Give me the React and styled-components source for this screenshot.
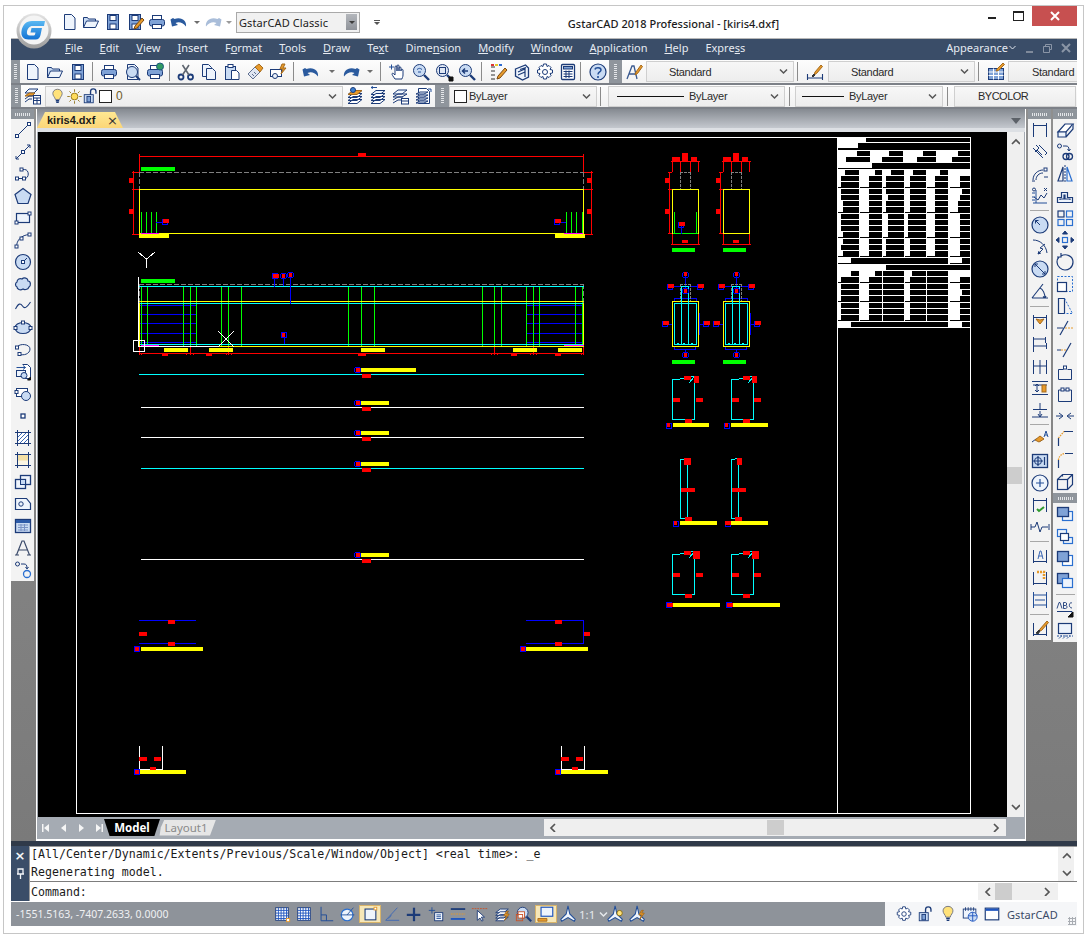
import React from 'react';
import styled, {createGlobalStyle} from 'styled-components';

const NAVY = '#1c3b78';
const SKY = '#c9dbf3';
const PALE = '#eef4fc';
const MID = '#7fa2d6';
const ORANGE = '#e79a2b';
const UI_FONT = '"Noto Sans", "Liberation Sans", sans-serif';

const GlobalStyle = createGlobalStyle`
    html, body { margin: 0; padding: 0; background: #fff; }
`;

const Frame = styled.div`
    box-sizing: border-box;
    margin: 5px 0 0 3px;
    width: 1081px;
    height: 929px;
    border: 1px solid #c6c6c6;
    background: #fff;
    padding: 0 6px 7px 7px;
    display: flex;
    flex-direction: column;
    position: relative;
    font-family: ${UI_FONT};
    overflow: hidden;
`;

/* ---------- icons ---------- */
const Svg = styled.svg`
    display: block;
    fill: none;
    stroke: ${NAVY};
    stroke-width: 1;
    flex: none;
`;

const Arrow = ({fill, flip}) => (
    <g transform={flip ? 'translate(20 0) scale(-1 1)' : undefined}>
        <path d="M1.5 7.5l1.500 7 6-1.500-2.500-2c3-1.500 7-1 10.500 3.500 1-5-4-10-11.500-7.500l-1.500-1z" fill={fill} stroke="none"/>
    </g>
);
const Glass = ({fill = SKY}) => (
    <>
        <circle cx="8.5" cy="8.5" r="6" fill={fill}/>
        <path d="M13 13l5 5" strokeWidth="2.4"/>
    </>
);
const PagePlain = () => <path d="M5.5 2.5h7l3.5 3.5v11.5h-10.5z" fill={PALE}/>;
const SaveShape = () => (
    <>
        <rect x="4.5" y="2.5" width="11" height="15" fill={MID}/>
        <rect x="7" y="3.5" width="6" height="5" fill="#fff"/>
        <rect x="7" y="12" width="6" height="5" fill="#fff"/>
    </>
);
const PrintShape = () => (
    <>
        <rect x="5.5" y="3.5" width="9" height="4" fill="#fff"/>
        <rect x="2.5" y="7.5" width="15" height="6.5" rx="2" fill={MID}/>
        <rect x="5.5" y="12.5" width="9" height="4" fill="#fff"/>
    </>
);
const Pencil = () => <path d="M9 17l1-3 7-8 2 2-7 8z" fill={ORANGE} stroke="#7a4a12"/>;
const Square = ({x, y, s = 3}) => <rect x={x} y={y} width={s} height={s} fill="#fff" strokeWidth="1"/>;
const DimBase = () => <path d="M3.5 4v13M16.5 4v13M3.5 15.5h13"/>;
const DimTop = () => <path d="M3.5 3v14M16.5 3v14M3.5 5.5h13"/>;
const Layers = () => (
    <>
        <path d="M3 8.5l5-4h9l-5 4z" fill={PALE}/>
        <path d="M3 11.5l5-4h9l-5 4zM3 14.5l5-4h9l-5 4zM3 17.5l5-4h9l-5 4z" fill="#fff"/>
    </>
);
const Bulb = ({fill = '#ffe27a'}) => (
    <>
        <path d="M10 1.5c-3.5 0-5.500 2.500-5.500 5 0 3 2.500 4 3 7h5c.5-3 3-4 3-7 0-2.500-2-5-5.500-5z" fill={fill} stroke="#6b6f80"/>
        <path d="M8 15h4M8.5 17h3" stroke={NAVY} strokeWidth="1.5"/>
    </>
);
const LockOpen = () => (
    <>
        <rect x="2.5" y="8.5" width="10" height="9" fill={SKY}/>
        <rect x="5.5" y="10.5" width="4" height="6" fill={MID}/>
        <path d="M9.5 8.5v-3.500c0-2 1.500-3 3-3s3 1 3 3v2.500" strokeWidth="1.5"/>
    </>
);
const Cog = () => (
    <>
        <path d="M8.5 2h3l.5 2.500 2-1 2 2-1 2 2.500.5v3l-2.500.5 1 2-2 2-2-1-.5 2.500h-3l-.5-2.500-2 1-2-2 1-2-2.500-.5v-3l2.500-.5-1-2 2-2 2 1z" fill="#fff"/>
        <circle cx="10" cy="10" r="2.5"/>
    </>
);

const ICONS = {
    new: <PagePlain/>,
    open: (
        <>
            <path d="M2.5 15.5v-10h4l1 1.500h7v2" fill={SKY}/>
            <path d="M2.5 15.5l3-6.500h12l-3 6.500z" fill={PALE}/>
        </>
    ),
    save: <SaveShape/>,
    saveas: (
        <>
            <SaveShape/>
            <Pencil/>
        </>
    ),
    print: <PrintShape/>,
    undo: <Arrow fill="#2a5a9e"/>,
    redo: <Arrow fill="#2a5a9e" flip/>,
    redoOff: <Arrow fill="#a9bdd9" flip/>,
    preview: (
        <>
            <PagePlain/>
            <circle cx="10" cy="10" r="5.5" fill={SKY}/>
            <path d="M14 14l4 4" strokeWidth="2"/>
        </>
    ),
    plot: (
        <>
            <PrintShape/>
            <circle cx="15" cy="4.5" r="3.5" fill="#2f9a62" stroke="#1a5a7a"/>
        </>
    ),
    cut: (
        <>
            <circle cx="5" cy="15" r="2.5" strokeWidth="1.8"/>
            <circle cx="14.5" cy="15" r="2.5" strokeWidth="1.8"/>
            <path d="M6.5 13l6.500-10M13 13l-6.500-10" stroke="#5f6670" strokeWidth="1.6"/>
        </>
    ),
    copy: (
        <>
            <path d="M3.5 2.5h6l3 3v9h-9z" fill={PALE}/>
            <path d="M7.5 6.5h6l3 3v8h-9z" fill={PALE}/>
        </>
    ),
    paste: (
        <>
            <rect x="3.5" y="4.5" width="10" height="13" fill={SKY}/>
            <rect x="6" y="2.5" width="5" height="3" fill="#fff"/>
            <path d="M9.5 8.5h5l2.500 2.500v6.500h-7.500z" fill="#fff"/>
        </>
    ),
    match: (
        <>
            <path d="M3 12l7-7 5 5-7 7z" fill="#dfe6f2" stroke="#5f6f90"/>
            <path d="M10 5l4-3 4 4-3 4z" fill={ORANGE} stroke="#a56a1c"/>
            <path d="M5 14l2 2M7 12l2 2M9 10l2 2" stroke="#5f6f90"/>
        </>
    ),
    block: (
        <>
            <rect x="2.5" y="7.5" width="11" height="7" fill="#fff"/>
            <circle cx="7" cy="14" r="2.5" fill={PALE}/>
            <path d="M14 2l-2 5h3l-2 5 5-6h-3l2-4z" fill={ORANGE} stroke="#a56a1c"/>
        </>
    ),
    pan: (
        <>
            <path d="M7 17c-2-3-3-4-3-5s1-1 2 0l1 1V5c0-1.500 2-1.500 2 0v4V4c0-1.500 2-1.500 2 0v5-3c0-1.500 2-1.500 2 0v3-1c0-1 2-1 2 0v5c0 2-1 3-1 4z" fill="#fff"/>
            <path d="M1 5h5M3.5 2.5v5" stroke="#234f98"/>
        </>
    ),
    zoomrt: (
        <>
            <Glass/>
            <path d="M6 7.5c2-1.500 3-1.500 5 0M7 10h3" stroke="#234f98"/>
        </>
    ),
    zoomwin: (
        <>
            <Glass fill="#dfe6f2"/>
            <rect x="5.5" y="5.5" width="6" height="6"/>
            <path d="M15 15h4v4h-4z" fill="#111" stroke="#111"/>
        </>
    ),
    zoomprev: (
        <>
            <Glass/>
            <path d="M11 9H6M8 6.5L5.500 9 8 11.500" strokeWidth="1.5"/>
        </>
    ),
    props: (
        <>
            <path d="M2 5h4M2 9h4M2 13h4M2 17h4" stroke="#333"/>
            <rect x="2" y="2" width="3" height="2" fill="#d33" stroke="none"/>
            <rect x="6" y="2" width="3" height="2" fill="#e7c62b" stroke="none"/>
            <rect x="10" y="2" width="3" height="2" fill="#2f6bd0" stroke="none"/>
            <path d="M8 17l1-3 7-8 2 2-7 8z" fill={ORANGE} stroke="#7a4a12"/>
        </>
    ),
    palette: (
        <>
            <path d="M3.5 7l10-4 3 3v9l-6 3-7-4z" fill={PALE} strokeWidth="1.3"/>
            <path d="M6 10l7-3v8M8 7.5l6-2M6 13l7-3" strokeWidth="1.2"/>
        </>
    ),
    cog: <Cog/>,
    calc: (
        <>
            <rect x="3.5" y="2.5" width="13" height="15" rx="1" fill="#fff" strokeWidth="1.3"/>
            <rect x="5.5" y="4.5" width="9" height="2.5" fill={MID}/>
            <path d="M5.5 9.5h9M5.5 12h9M5.5 14.5h9M8 8.5v7.500M11 8.5v7.500" stroke={NAVY}/>
        </>
    ),
    help: (
        <>
            <circle cx="10" cy="10" r="8" fill={SKY} strokeWidth="1.2"/>
            <path d="M7 7.5c.5-2.500 6-2.500 6 .5 0 2-3 2-3 4.500" strokeWidth="1.5" stroke="#234f98"/>
            <path d="M10 14v2" strokeWidth="1.6" stroke="#234f98"/>
        </>
    ),
    textstyle: (
        <>
            <path d="M3 17l5-13h2l3 13M5.5 12h6" strokeWidth="1.3" stroke="#3a5a90"/>
            <path d="M11 13l1-3 5-7 1.500 1.500-5 7z" fill={ORANGE} stroke="#a56a1c"/>
        </>
    ),
    dimstyle: (
        <>
            <path d="M2.5 12v6M17.5 12v6M2.5 16h15" strokeWidth="1.1"/>
            <path d="M9 13l1-3 6-7 1.500 1.500-6 7z" fill={ORANGE} stroke="#a56a1c"/>
            <path d="M7 14l2-2 1 1-2 2z" fill="#333" stroke="#333"/>
        </>
    ),
    tablestyle: (
        <>
            <rect x="2.5" y="6.5" width="15" height="11" fill={MID}/>
            <path d="M2.5 10h15M2.5 13.5h15M7.5 6.5v11M12.5 6.5v11" stroke="#fff"/>
            <path d="M10 9l1-2 6-6 1.500 1.500-6 6z" fill={ORANGE} stroke="#a56a1c"/>
        </>
    ),
    layerprops: (
        <>
            <path d="M2 7l4-4h9l-4 4z" fill={PALE}/>
            <path d="M2 10l4-3h6l-3 3z" fill={ORANGE} stroke="#a56a1c"/>
            <path d="M2 13l4-3h4M2 16l4-3h3"/>
            <rect x="10.5" y="9.5" width="7" height="8.5" fill="#fff"/>
            <path d="M10.5 12h7M10.5 14.5h7M14 12v6"/>
        </>
    ),
    bulb: <Bulb/>,
    sun: (
        <>
            <circle cx="10" cy="10" r="4" fill="#ffdc5c" stroke="#8a6d10"/>
            <path d="M10 1.5v3M10 15.5v3M1.5 10h3M15.5 10h3M4 4l2 2M14 14l2 2M4 16l2-2M14 6l2-2" stroke="#8a6d10"/>
        </>
    ),
    lock: <LockOpen/>,
    layerA: (
        <>
            <Layers/>
            <path d="M3 8.5l5-4h9l-5 4z" fill={ORANGE} stroke="#a56a1c"/>
            <circle cx="8" cy="4" r="2.5" fill="#3c7fd0"/>
        </>
    ),
    layerB: (
        <>
            <Layers/>
            <path d="M3 1.5h6M3 1.5l2-1M3 1.5l2 1" stroke="#234f98"/>
        </>
    ),
    layerC: (
        <>
            <path d="M2 8l5-4h9l-5 4z" fill={PALE}/>
            <path d="M2 11l5-3h9l-5 3zM2 14l5-3h5M2 17l5-3h4"/>
            <rect x="10.5" y="12.5" width="7" height="5.5" fill="#fff"/>
            <path d="M10.5 15h7"/>
        </>
    ),
    layerD: (
        <>
            <path d="M4.5 2.5h8l3 3v12h-11z" fill="#fff"/>
            <path d="M2 8l4-2h8l-4 2zM2 11l4-2h8l-4 2zM2 14l4-2h8l-4 2zM2 17l4-2h8l-4 2z" fill={PALE}/>
            <path d="M14 3l3 0v3" stroke="#234f98"/>
        </>
    ),

    /* draw dock */
    line: (
        <>
            <path d="M4 16L16 4"/>
            <Square x={2.5} y={14.5}/>
            <Square x={14.5} y={2.5}/>
        </>
    ),
    xline: (
        <>
            <path d="M3 17L17 3"/>
            <path d="M3 17v-3M3 17h3M17 3v3M17 3h-3"/>
            <Square x={8.5} y={8.5}/>
        </>
    ),
    pline: (
        <>
            <path d="M4.5 14.5h7c5 0 5-9 0-9h-3"/>
            <Square x={2.5} y={13}/>
            <Square x={9.5} y={13}/>
            <Square x={7} y={4}/>
        </>
    ),
    polygon: <path d="M10 2.5l8 6-3 9H5l-3-9z" fill={SKY} strokeWidth="1.2"/>,
    rect: (
        <>
            <rect x="3.5" y="5.5" width="13" height="9" fill={PALE} strokeWidth="1.2"/>
            <Square x={2} y={13}/>
            <Square x={15} y={4}/>
        </>
    ),
    arc: (
        <>
            <path d="M3.5 17c0-7 5-12 13-12.500"/>
            <Square x={2} y={15}/>
            <Square x={15} y={3}/>
            <Square x={7} y={7}/>
        </>
    ),
    circle: (
        <>
            <circle cx="10" cy="10" r="7.5" fill={SKY} strokeWidth="1.2"/>
            <path d="M10 10l4-4"/>
            <Square x={8.5} y={8.5}/>
        </>
    ),
    cloud: <path d="M4 8c0-3 3-4 5-3 2-2 6-1 6 2 3 0 3 5 1 6-1 3-5 3-6 2-3 2-6 0-6-2-2-1-2-4 0-5z" fill={SKY} strokeWidth="1.2"/>,
    spline: <path d="M2.5 13c3-6 5-6 7-3s4 2 8-4" strokeWidth="1.1"/>,
    ellipse: (
        <>
            <ellipse cx="10" cy="10" rx="8" ry="5.5" fill={SKY} strokeWidth="1.2"/>
            <Square x={8.5} y={3}/>
            <Square x={1} y={8.5}/>
            <Square x={16} y={8.5}/>
        </>
    ),
    earc: (
        <>
            <path d="M4 7c3-4 13-3 13 2s-7 7-10 5"/>
            <Square x={2.5} y={6}/>
            <Square x={5} y={12.5}/>
        </>
    ),
    insert: (
        <>
            <path d="M9.5 2.5h5l3 3v11H12" fill="#fff"/>
            <rect x="3.5" y="8.5" width="9" height="6" fill={PALE}/>
            <path d="M3.5 5.5h9M10 3.5l2.500 2-2.500 2" stroke="#234f98"/>
            <circle cx="11" cy="13.5" r="3" fill={SKY}/>
            <path d="M14.5 18l3-3v3z" fill="#111" stroke="#111"/>
        </>
    ),
    blockdef: (
        <>
            <rect x="3.5" y="4.5" width="11" height="8" fill="#fff"/>
            <circle cx="13" cy="12" r="4.5" fill={SKY}/>
            <Square x={2} y={6.5}/>
        </>
    ),
    point: <rect x="8" y="8" width="4" height="4" fill="#fff" strokeWidth="1.3"/>,
    hatch: (
        <>
            <rect x="4.5" y="4.5" width="11" height="11" fill="#fff"/>
            <path d="M5 13l8-8M7 15l8-8M5 9l4-4M11 15l4-4" stroke="#3c68b5"/>
            <path d="M2 4.5h16M2 15.5h16M4.5 2v16M15.5 2v16"/>
        </>
    ),
    gradient: (
        <>
            <rect x="4.5" y="4.5" width="11" height="11" fill="#f3dfa5"/>
            <rect x="4.5" y="10.5" width="11" height="5" fill="#fbf6e4" stroke="none"/>
            <path d="M2 4.5h16M2 15.5h16M4.5 2v16M15.5 2v16"/>
        </>
    ),
    region: (
        <>
            <rect x="7.5" y="3.5" width="10" height="9" fill={PALE} strokeWidth="1.3"/>
            <rect x="2.5" y="7.5" width="10" height="9" fill={PALE} strokeWidth="1.3"/>
            <rect x="7.5" y="7.5" width="5" height="5" fill={SKY}/>
        </>
    ),
    wipeout: (
        <>
            <path d="M2.5 4.5h11l4 5v6h-15z" fill={PALE} strokeWidth="1.2"/>
            <circle cx="8" cy="10" r="2.2"/>
        </>
    ),
    table: (
        <>
            <rect x="2.5" y="3.5" width="15" height="13" fill={SKY} strokeWidth="1.3"/>
            <rect x="3" y="4" width="14" height="3" fill="#2c5aa8" stroke="none"/>
            <path d="M5 9h10M5 11.5h10M5 14h10M8 8v7M11.5 8v7" stroke="#7a93c5"/>
        </>
    ),
    text: <path d="M3.5 17l5.500-14h2l5.500 14M6 12h8M2 17h4M14 17h4" stroke="#3a4a6a" strokeWidth="1.2"/>,
    addsel: (
        <>
            <circle cx="4.5" cy="4" r="2"/>
            <circle cx="14" cy="14" r="3.5" stroke="#2a6fd0" strokeWidth="1.3"/>
            <path d="M8 4h3c2 0 3 1 3 4M12.5 7l1.500 2 1.500-2"/>
        </>
    ),

    /* dimension dock */
    dimlinear: <DimTop/>,
    dimaligned: <path d="M3 6l10 10M9 3l8 8-2 2M6 3l3 3-4 4M7 8l5 5"/>,
    dimarc: (
        <>
            <path d="M3 16c0-6 5-10 10-10M6 16c0-4 3-7 7-7"/>
            <Square x={14} y={4}/>
            <path d="M2 17h3M14 13h4"/>
        </>
    ),
    dimord: (
        <>
            <path d="M3 17h14M6 4v13" stroke="#234f98"/>
            <path d="M4 11l4 3 3-5 3 3 3-5"/>
            <circle cx="4" cy="3.5" r="1.5"/>
            <path d="M14 2l3 3M17 2l-3 3"/>
            <path d="M2 7h3M2 11h3M2 14h3" stroke="#234f98"/>
        </>
    ),
    dimrad: (
        <>
            <circle cx="10" cy="10" r="8" fill={SKY} strokeWidth="1.2"/>
            <path d="M10 10L5.500 5.500M5.5 5.5v3M5.5 5.5h3"/>
        </>
    ),
    dimjog: <path d="M3 3c7 0 13 5 14 13M15 7l-5 4 3 1-5 5M8 17l1-3M8 17l3-1"/>,
    dimdia: (
        <>
            <circle cx="10" cy="10" r="8" fill={SKY} strokeWidth="1.2"/>
            <path d="M5 5l10 10M5 5v3M5 5h3M15 15v-3M15 15h-3"/>
        </>
    ),
    dimang: <path d="M2 17h16M2 17L13 3M10 7c3 1 5 6 5 10M15 17l-2-1.500M15 17l1-2" strokeWidth="1.1"/>,
    quickdim: (
        <>
            <DimTop/>
            <path d="M6 7l4 5 4-5-4 1z" fill={ORANGE} stroke="#a56a1c"/>
        </>
    ),
    dimbase: <path d="M3.5 3v15M3.5 5h12M15.5 3v6M3.5 12h13M16.5 9v6"/>,
    dimcont: <path d="M3.5 4v14M10 4v14M16.5 4v14M3.5 10h13"/>,
    dimspace: (
        <>
            <path d="M2 3.5h16M2 16.5h16M3 7h14"/>
            <rect x="12" y="7" width="4" height="7" fill={ORANGE} stroke="#a56a1c"/>
            <path d="M7 6v8M5 8l2-2 2 2M5 12l2 2 2-2"/>
        </>
    ),
    dimbreak: <path d="M3 9.5h14M10 3v6M10 11v6M2 17h16M8 14l2 3 2-3"/>,
    leader: (
        <>
            <path d="M2 13l4-3 5 2"/>
            <path d="M5 11l5-4 4 3-5 3z" fill={ORANGE} stroke="#a56a1c"/>
            <path d="M14 8l2-6 2 6M15 6h2" stroke="#234f98"/>
        </>
    ),
    tol: (
        <>
            <rect x="2.5" y="3.5" width="15" height="13" fill={SKY} strokeWidth="1.3"/>
            <circle cx="8" cy="10" r="3.5"/>
            <path d="M3 10h10M8 5v10M14.5 6v8" strokeWidth="1.2"/>
        </>
    ),
    center: (
        <>
            <circle cx="10" cy="10" r="8" fill={PALE} strokeWidth="1.2"/>
            <path d="M10 6v8M6 10h8" stroke="#234f98" strokeWidth="1.2"/>
        </>
    ),
    inspect: (
        <>
            <DimTop/>
            <path d="M7 14l2 2 5-4" stroke="#2f9a2f" strokeWidth="2"/>
        </>
    ),
    jogline: <path d="M1 10h4l2-5 3 10 2-5h6M1 7v6M19 7v6"/>,
    dimedit: (
        <>
            <DimBase/>
            <path d="M8 13l2-8h1l2 8M8.5 10h4" stroke="#3c68b5"/>
        </>
    ),
    dimtedit: (
        <>
            <DimBase/>
            <path d="M7 4h7v7" stroke={ORANGE} strokeWidth="2.5" strokeDasharray="2 1"/>
        </>
    ),
    dimupdate: <path d="M3.5 2v16M16.5 2v16M3.5 5h13M3.5 15h13M5 10h10" stroke="#234f98"/>,
    dimbrush: (
        <>
            <DimBase/>
            <path d="M9 12l1-2 7-8 1.500 1.500-7 8z" fill={ORANGE} stroke="#a56a1c"/>
            <path d="M6 14l3-3 1 1-2 3z" fill="#333" stroke="#333"/>
        </>
    ),

    /* modify dock */
    erase: (
        <>
            <path d="M3 12l7-8h8l-7 8z" fill="#fff" strokeWidth="1.2"/>
            <path d="M3 12h8v5H3zM11 17l7-8v-5" fill={PALE} strokeWidth="1.2"/>
        </>
    ),
    copyobj: (
        <>
            <circle cx="4.5" cy="4" r="2"/>
            <circle cx="14.5" cy="14.5" r="3" strokeWidth="1.3"/>
            <circle cx="11" cy="14.5" r="3" strokeWidth="1.3"/>
            <path d="M8 4h3c2 0 3 1 3 4M12.5 7l1.500 2 1.500-2"/>
        </>
    ),
    mirror: (
        <>
            <path d="M8 3L3 17h5z" strokeWidth="1.2"/>
            <path d="M12 3l5 14h-5z" stroke="#2a6fd0" strokeWidth="1.2"/>
            <path d="M10 1v18" strokeDasharray="2 1"/>
        </>
    ),
    offset: <path d="M2.5 16.5v-5h4v-5h6v5h5v5zM5 14v-1h4V9h1v4h5v1" strokeWidth="1.2" fill={PALE}/>,
    array: (
        <>
            <rect x="3" y="3" width="6" height="6" strokeWidth="1.2"/>
            <rect x="11.5" y="3" width="6" height="6" stroke="#2a6fd0" strokeWidth="1.2"/>
            <rect x="3" y="11.5" width="6" height="6" stroke="#2a6fd0" strokeWidth="1.2"/>
            <rect x="11.5" y="11.5" width="6" height="6" stroke="#2a6fd0" strokeWidth="1.2"/>
        </>
    ),
    move: (
        <>
            <rect x="7.5" y="7.5" width="5" height="5" stroke="#2a6fd0" strokeWidth="1.2"/>
            <path d="M10 1l-2.500 3h5zM10 19l-2.500-3h5zM1 10l3-2.500v5zM19 10l-3-2.500v5z" fill={NAVY}/>
        </>
    ),
    rotate: <path d="M6 4c5-3 12 0 12 6s-5 8-8 8-8-3-8-8c0-2 1-4 2-5M6 1v4H2" strokeWidth="1.2"/>,
    scale: (
        <>
            <rect x="2.5" y="2.5" width="15" height="15" stroke="#2a6fd0" strokeDasharray="2 1.5"/>
            <rect x="2.5" y="8.5" width="9" height="9" fill="#fff" strokeWidth="1.2"/>
        </>
    ),
    stretch: (
        <>
            <path d="M3.5 2.5h6v15h-6z" strokeWidth="1.2"/>
            <path d="M9.5 2.5l8 15h-8" stroke="#2a6fd0" strokeDasharray="2 1.5"/>
        </>
    ),
    trim: (
        <>
            <path d="M5 17L13 3" strokeWidth="1.2"/>
            <path d="M2 10h6"/>
            <path d="M10 10h8" stroke={ORANGE} strokeDasharray="2 1"/>
        </>
    ),
    extend: (
        <>
            <path d="M8 17L16 3" strokeWidth="1.2"/>
            <path d="M2 10h4"/>
            <path d="M6 10h6" stroke={ORANGE} strokeDasharray="2 1"/>
        </>
    ),
    breakpt: (
        <>
            <path d="M3.5 7.5v10h13v-10h-4M3.5 7.5h5"/>
            <Square x={8.5} y={4}/>
        </>
    ),
    breaks: (
        <>
            <path d="M3.5 6v11.500h13V6M3.5 6H6M14 6h2.500M9 6h2"/>
            <Square x={6} y={4}/>
            <Square x={11} y={4}/>
        </>
    ),
    join: <path d="M1 10h6M19 10h-6M4 7l4 3-4 3M16 7l-4 3 4 3"/>,
    chamfer: (
        <>
            <path d="M3.5 18v-8M9 3.5h9" strokeWidth="1.2"/>
            <path d="M3.5 10L9 3.500" stroke={ORANGE} strokeWidth="1.3" strokeDasharray="1.5 1"/>
        </>
    ),
    fillet: (
        <>
            <path d="M3.5 18v-8M10 3.5h8" strokeWidth="1.2"/>
            <path d="M3.5 10c0-3 3-6.500 6.500-6.500" stroke={ORANGE} strokeWidth="1.3" strokeDasharray="1.5 1"/>
        </>
    ),
    explode: (
        <>
            <rect x="2.5" y="7.5" width="10" height="10" strokeWidth="1.2"/>
            <path d="M2.5 7.5l5-5h10v10l-5 5M12.5 7.5l5-5M7.5 2.5v2" strokeWidth="1.2"/>
        </>
    ),
    front: (
        <>
            <rect x="7.5" y="7.5" width="10" height="9" fill={PALE} stroke="#2a6fd0" strokeWidth="1.2"/>
            <rect x="2.5" y="3.5" width="11" height="9" fill={MID} strokeWidth="1.3"/>
        </>
    ),
    back: (
        <>
            <rect x="2.5" y="3.5" width="9" height="7" fill={PALE} stroke="#2a6fd0" strokeWidth="1.2"/>
            <rect x="8.5" y="11.5" width="9" height="6" fill={PALE} stroke="#2a6fd0" strokeWidth="1.2"/>
            <rect x="5.5" y="7.5" width="8" height="7" fill="#fff" strokeWidth="1.2"/>
        </>
    ),
    above: (
        <>
            <rect x="7.5" y="7.5" width="10" height="10" fill="#fff" stroke="#2a6fd0" strokeWidth="1.2"/>
            <rect x="2.5" y="3.5" width="11" height="10" fill={MID} strokeWidth="1.3"/>
        </>
    ),
    below: (
        <>
            <rect x="2.5" y="3.5" width="11" height="10" fill={MID} strokeWidth="1.3"/>
            <rect x="7.5" y="8.5" width="10" height="9" fill={PALE} stroke="#2a6fd0" strokeWidth="1.2"/>
        </>
    ),
    spell: (
        <>
            <path d="M2 9.5l2-6h1l2 6M8.5 3.5v6M8.5 3.5h2c1.500 0 1.500 3 0 3h-2M10.5 6.5c2 0 2 3 0 3h-2M17 4c-3-1.500-4 5 0 5" strokeWidth=".9"/>
            <path d="M2 12.5h15v5"/>
            <path d="M13 18l5-5v5z" fill="#111" stroke="#111"/>
        </>
    ),
    mtedit: (
        <>
            <rect x="3.5" y="2.5" width="13" height="10" fill={PALE} strokeWidth="1.2"/>
            <path d="M2 15h16M4 17.5l3-3M8 17.5l3-3M12 17.5l3-3" strokeDasharray="2 1" stroke="#234f98"/>
        </>
    ),

    /* status bar */
    snap: (
        <>
            <rect x="3" y="3" width="14" height="14" fill="#fff"/>
            <path d="M3 6h14M3 9h14M3 12h14M3 15h14M6 3v14M9 3v14M12 3v14M15 3v14" stroke="#1e55c0"/>
            <rect x="15" y="15" width="3.5" height="3.5" fill="#fff" stroke={ORANGE}/>
        </>
    ),
    grid: (
        <>
            <rect x="3" y="3" width="14" height="14" fill="#fff"/>
            <path d="M3 6h14M3 9h14M3 12h14M3 15h14M6 3v14M9 3v14M12 3v14M15 3v14" stroke="#1e55c0"/>
        </>
    ),
    ortho: <path d="M4.5 2v15.500H18M4.5 11h6v6.500" stroke="#234f98" strokeWidth="1.1"/>,
    polar: (
        <>
            <circle cx="9" cy="11" r="6.5" stroke="#2a6fd0" strokeWidth="1.3" fill={PALE}/>
            <path d="M2 11h15M9 11l7-8" stroke="#234f98"/>
        </>
    ),
    osnap: (
        <>
            <rect x="4.5" y="4.5" width="12" height="12" fill={PALE} strokeWidth="1.2"/>
            <rect x="14.5" y="2.5" width="3" height="3" fill="#fff" stroke={ORANGE}/>
        </>
    ),
    otrack: <path d="M3 17h15M3 17L16 3M6 15c2-1 3-3 3-4" stroke="#3c68b5"/>,
    ducs: (
        <>
            <path d="M2 11h15" stroke="#1c3b78" strokeWidth="2.5"/>
            <path d="M10 3v15" stroke="#1c3b78" strokeWidth="2.5"/>
        </>
    ),
    dyn: (
        <>
            <path d="M2 6h7M5.5 2.5v7" stroke="#234f98"/>
            <rect x="8.5" y="8.5" width="9" height="9" fill={PALE}/>
            <path d="M10.5 11h5M10.5 13h5M10.5 15h5" stroke="#234f98"/>
        </>
    ),
    lwt: (
        <>
            <path d="M2 4.5h16" stroke={NAVY} strokeWidth="2"/>
            <path d="M2 10h16" stroke={ORANGE} strokeDasharray="2 1"/>
            <path d="M2 15.5h16" stroke="#1e55c0" strokeWidth="2"/>
        </>
    ),
    seltrans: (
        <>
            <path d="M1 4h18" stroke="#c8542a" strokeDasharray="2 1"/>
            <path d="M7 6v11l3-2.500 2 3.500 1.500-1-2-3.500h3.500z" fill="#fff" stroke="#1c3b78"/>
        </>
    ),
    qp: (
        <>
            <Layers/>
            <path d="M15 7l-3 5h3l-2 5 5-7h-3l2-3z" fill={ORANGE} stroke="#a56a1c"/>
        </>
    ),
    sc: (
        <>
            <Glass/>
            <rect x="3.5" y="7.5" width="7" height="7" fill="#fff" stroke="#c8542a"/>
            <rect x="1.5" y="10.5" width="7" height="7" fill="none" stroke="#c8542a"/>
        </>
    ),
    model: (
        <>
            <rect x="4.5" y="2.5" width="13" height="10" fill={PALE} strokeWidth="1.3" stroke="#1e55c0"/>
            <path d="M1 15h10v3H1z" fill={ORANGE} stroke="#a56a1c"/>
        </>
    ),
    anno: <path d="M10 1l2 9 6 6-1 2-7-4-7 4-1-2 6-6z" fill={PALE} stroke="#234f98" strokeWidth="1.2"/>,
    annoB: (
        <>
            <path d="M9 1l2 9 6 6-1 2-7-4-7 4-1-2 6-6z" fill={PALE} stroke="#234f98" strokeWidth="1.2"/>
            <circle cx="14" cy="9" r="3" fill="#ffe27a" stroke="#8a6d10"/>
        </>
    ),
    annoC: (
        <>
            <path d="M9 1l2 9 6 6-1 2-7-4-7 4-1-2 6-6z" fill={PALE} stroke="#234f98" strokeWidth="1.2"/>
            <path d="M14 6l-3 5h3l-2 5 5-7h-3l2-3z" fill={ORANGE} stroke="#a56a1c"/>
        </>
    ),
    traytoolbar: (
        <>
            <rect x="2.5" y="4.5" width="14" height="10" fill={PALE}/>
            <path d="M5 2.5v4M8 2.5v4M11 2.5v4M14 2.5v4"/>
            <circle cx="13" cy="13" r="5" fill={SKY} stroke="#1e55c0"/>
            <path d="M8 12h10M13 8v10" stroke="#1e55c0"/>
        </>
    ),
    window: (
        <>
            <rect x="2.5" y="3.5" width="15" height="13" fill="#fff" strokeWidth="1.3"/>
            <rect x="3" y="4" width="14" height="2.5" fill="#1e55c0" stroke="none"/>
        </>
    ),
};

const Icon = ({name, size = 20}) => (
    <Svg width={size} height={size} viewBox="0 0 20 20">{ICONS[name]}</Svg>
);

const Chevron = ({color = '#555'}) => (
    <svg width="9" height="7" viewBox="0 0 9 7" style={{display: 'block', flex: 'none'}}>
        <path d="M1 1.5l3.500 3.500 3.500-3.500" fill="none" stroke={color} strokeWidth="1.5"/>
    </svg>
);

const Caret = styled.span`
    width: 0;
    height: 0;
    border-left: 3.5px solid transparent;
    border-right: 3.5px solid transparent;
    border-top: 3.5px solid ${p => p.$color || '#6d6d6d'};
    flex: none;
`;

/* ---------- title bar ---------- */
const TitleBar = styled.div`
    height: 32px;
    flex: none;
    display: flex;
    align-items: center;
    position: relative;
`;

const LogoWrap = styled.div`
    position: absolute;
    left: 12px;
    top: 7px;
    z-index: 3;
`;

const Quick = styled.div`
    display: flex;
    align-items: center;
    padding-left: 47px;
`;

const QuickBtn = styled.div`
    width: ${p => p.$w || 22}px;
    display: flex;
    justify-content: center;
`;

const ProfileCombo = styled.div`
    box-sizing: border-box;
    width: 124px;
    height: 21px;
    margin-left: 1px;
    border: 1px solid #a9a9a9;
    background: #f1f1f1;
    display: flex;
    align-items: center;
    padding-left: 2px;
    font-size: 11px;
    letter-spacing: .1px;
    color: #222;
    justify-content: space-between;
`;

const ProfileDrop = styled.div`
    width: 11px;
    height: 16px;
    margin-right: 2px;
    background: linear-gradient(#b4b7bc, #8f939a);
    display: flex;
    align-items: center;
    justify-content: center;
`;

const QatMore = styled.div`
    margin-left: 14px;
    display: flex;
    flex-direction: column;
    gap: 1px;
    align-items: center;
    &::before {
        content: '';
        width: 6px;
        height: 1px;
        background: #555;
    }
`;

const WindowTitle = styled.div`
    position: absolute;
    left: 0;
    right: 0;
    top: 9px;
    text-align: center;
    margin-left: 259px;
    font-size: 11px;
    font-weight: 500;
    color: #1c1c1c;
    line-height: 18px;
`;

const WindowBtns = styled.div`
    margin-left: auto;
    display: flex;
    align-self: flex-start;
    position: relative;
    z-index: 1;
`;

const WinBtn = styled.div`
    width: ${p => p.$w}px;
    height: 20px;
    display: flex;
    align-items: center;
    justify-content: center;
    background: ${p => p.$bg || 'transparent'};
`;

const MinGlyph = styled.div`
    width: 8px;
    height: 2px;
    background: #222;
    margin-top: 4px;
`;

const MaxGlyph = styled.div`
    width: 9px;
    height: 7px;
    border: 1px solid #222;
    border-top-width: 2px;
`;

/* ---------- menu ---------- */
const MenuBar = styled.div`
    box-sizing: border-box;
    height: 22px;
    flex: none;
    background: #3a4d68;
    border-top: 1px solid #b7b7b7;
    display: flex;
    align-items: center;
    padding: 0 0 3px 54px;
    gap: 17px;
    color: #e6ebf2;
    font-size: 11px;
    line-height: 16px;
    position: relative;
    u { text-underline-offset: 1px; }
`;

const MenuItem = styled.span`
    white-space: nowrap;
`;

const MenuRight = styled.div`
    margin-left: auto;
    display: flex;
    align-items: center;
    padding-right: 6px;
    color: #e6ebf2;
`;

const DocBtns = styled.div`
    display: flex;
    align-items: center;
    gap: 9px;
    margin-left: 8px;
    color: #7f8a9b;
`;

/* ---------- tool rows ---------- */
const ToolRows = styled.div`
    flex: none;
    background: #7c8087;
    padding-bottom: 2px;
    display: flex;
    flex-direction: column;
    gap: 2px;
`;

const ToolRow = styled.div`
    height: ${p => p.$h || 23}px;
    display: flex;
    align-items: center;
    background: linear-gradient(#fdfdfd, #f1f1f1);
    overflow: hidden;
`;

const Grip = styled.div`
    width: ${p => p.$w || 10}px;
    align-self: stretch;
    background: #8f959c;
    flex: none;
    display: flex;
    align-items: center;
    justify-content: center;
    &::before {
        content: '';
        width: 3px;
        height: 16px;
        background: repeating-linear-gradient(#e4e6e9 0 1px, transparent 1px 2px);
    }
`;

const ToolBtn = styled.div`
    width: ${p => p.$w || 23}px;
    height: 21px;
    flex: none;
    display: flex;
    align-items: center;
    justify-content: center;
`;

const Sep = styled.div`
    width: 1px;
    height: 19px;
    background: #8b8b8b;
    flex: none;
    margin: 0 ${p => p.$r ?? 5}px 0 ${p => p.$l ?? 3}px;
`;

const Combo = styled.div`
    box-sizing: border-box;
    width: ${p => p.$w}px;
    height: 21px;
    flex: none;
    background: linear-gradient(#f7f7f7, #ededed);
    border: 1px solid #cfcfcf;
    display: flex;
    align-items: center;
    padding: 0 5px 0 ${p => p.$pad || 4}px;
    margin-left: ${p => p.$ml || 0}px;
    font-family: "Liberation Sans", sans-serif;
    font-size: 11px;
    color: #2a2a2a;
`;

const ComboText = styled.span`
    letter-spacing: ${p => p.$ls || 0}px;
    white-space: nowrap;
`;

const ComboEnd = styled.span`
    margin-left: auto;
    display: flex;
`;

const Swatch = styled.span`
    width: 11px;
    height: 11px;
    border: 1px solid #222;
    background: #fff;
    flex: none;
    margin-right: 2px;
`;

const LineSample = styled.span`
    height: 1px;
    background: #111;
    width: ${p => p.$w}px;
    flex: none;
    margin-right: 5px;
`;

const LayerCombo = styled(Combo)`
    padding-left: 3px;
`;

const LayerName = styled.span`
    color: #6e5c2b;
    margin-left: 2px;
    font-size: 12px;
`;

/* ---------- work area ---------- */
const Workspace = styled.div`
    height: 732px;
    flex: none;
    display: flex;
    background: linear-gradient(#8f8f8f, #7a7a7a);
`;

const Dock = styled.div`
    width: ${p => p.$w || 24}px;
    flex: none;
    align-self: flex-start;
    display: flex;
    flex-direction: column;
    background: #f3f3f3;
    margin-right: ${p => p.$mr || 0}px;
`;

const DockGrip = styled.div`
    height: ${p => p.$h || 10}px;
    background: #8f959c;
    display: flex;
    align-items: center;
    justify-content: center;
    &::before {
        content: '';
        width: 15px;
        height: 3px;
        background: repeating-linear-gradient(90deg, #e4e6e9 0 1px, transparent 1px 2px);
    }
`;

const DockBtn = styled.div`
    height: 22px;
    display: flex;
    align-items: center;
    justify-content: center;
`;

const DockSep = styled.div`
    height: ${p => p.$h || 7}px;
    display: flex;
    align-items: center;
    justify-content: center;
    &::before {
        content: '';
        width: 19px;
        height: 1px;
        background: #a8a8a8;
    }
`;

const Doc = styled.div`
    box-sizing: border-box;
    width: 990px;
    flex: none;
    background: #a5abb3;
    border: solid #fff;
    border-width: 0 1px 2px 1px;
    display: flex;
    flex-direction: column;
    margin: 0 2px;
`;

const DocTabs = styled.div`
    height: 23px;
    box-sizing: border-box;
    padding-top: 3px;
    flex: none;
    display: flex;
    align-items: flex-start;
    position: relative;
    background: linear-gradient(#858a91 0, #c4c8ce 19px, #dde0e4 19px, #dde0e4 100%);
`;

const DocTab = styled.div`
    box-sizing: border-box;
    width: 86px;
    height: 16px;
    background: linear-gradient(#ffe892, #fbd678);
    clip-path: polygon(0 100%, 8px 0, 78px 0, 100% 100%);
    display: flex;
    align-items: center;
    padding: 0 5px 0 10px;
    font-family: "Liberation Sans", sans-serif;
    font-size: 11px;
    font-weight: 700;
    color: #1a1a1a;
    justify-content: space-between;
`;

const TabClose = styled.span`
    font-size: 13px;
    font-weight: 400;
    color: #333;
    font-family: "DejaVu Sans", sans-serif;
`;

const DocListBtn = styled.div`
    position: absolute;
    right: 4px;
    top: 9px;
    width: 0;
    height: 0;
    border-left: 5px solid transparent;
    border-right: 5px solid transparent;
    border-top: 6px solid #5c6168;
`;

const CanvasRow = styled.div`
    height: 685px;
    flex: none;
    display: flex;
    padding-left: 1px;
`;

const Canvas = styled.div`
    width: 969px;
    height: 685px;
    background: #000;
    flex: none;
`;

const VScroll = styled.div`
    width: 17px;
    flex: none;
    box-sizing: border-box;
    background: #efefef;
    display: flex;
    flex-direction: column;
    align-items: center;
    justify-content: space-between;
    padding: 6px 0 5px;
    position: relative;
`;

const VThumb = styled.div`
    width: 15px;
    height: 17px;
    background: #cdcdcd;
    position: absolute;
    top: 335px;
    left: 0;
`;

const DocBottom = styled.div`
    height: 17px;
    margin-top: 2px;
    flex: none;
    display: flex;
    align-items: center;
`;

const TabNav = styled.div`
    display: flex;
    align-items: center;
    width: 67px;
    padding-left: 5px;
    box-sizing: border-box;
    gap: 9.5px;
`;

const NavGlyph = styled.svg`
    width: 8px;
    height: 8px;
    fill: #f5f5f5;
    flex: none;
`;

const ModelTab = styled.div`
    width: 56px;
    height: 17px;
    background: #000;
    color: #fff;
    font-size: 11.5px;
    font-weight: 700;
    clip-path: polygon(0 0, 100% 0, 90% 100%, 10% 100%);
    display: flex;
    align-items: center;
    justify-content: center;
    flex: none;
`;

const LayoutTab = styled.div`
    width: 60px;
    height: 16px;
    background: #e6e6e6;
    color: #8a8a8a;
    font-size: 11.5px;
    clip-path: polygon(8% 50%, 14% 0, 100% 0, 90% 100%, 6% 100%);
    display: flex;
    align-items: center;
    justify-content: center;
    flex: none;
    margin-left: -4px;
`;

const HScroll = styled.div`
    margin-left: auto;
    width: 462px;
    height: 17px;
    background: #efefef;
    margin-right: 19px;
    display: flex;
    align-items: center;
    justify-content: space-between;
    padding: 0 5px;
    box-sizing: border-box;
    position: relative;
`;

const HThumb = styled.div`
    position: absolute;
    left: 223px;
    top: 1px;
    width: 17px;
    height: 15px;
    background: #cdcdcd;
`;

const Arrowhead = ({dir}) => {
    const paths = {
        left: 'M6 1L2 5l4 4',
        right: 'M2 1l4 4-4 4',
        up: 'M1 6l4-4 4 4',
        down: 'M1 2l4 4 4-4',
    };
    return (
        <svg width="9" height="9" viewBox="0 0 9 9" style={{display: 'block', flex: 'none'}}>
            <path d={paths[dir]} fill="none" stroke="#555" strokeWidth="1.7"/>
        </svg>
    );
};

/* ---------- command window ---------- */
const CommandWin = styled.div`
    height: 60px;
    flex: none;
    display: flex;
    background: #3a4d68;
    border-top: 5px solid #303a49;
    box-sizing: border-box;
`;

const CmdSide = styled.div`
    width: 18px;
    flex: none;
    display: flex;
    flex-direction: column;
    align-items: center;
    color: #f4f6f9;
    padding-top: 3px;
    gap: 5px;
    font-size: 13px;
    font-weight: 700;
    line-height: 14px;
    font-family: "DejaVu Sans", sans-serif;
`;

const CmdMain = styled.div`
    flex: 1;
    background: #fff;
    display: flex;
    flex-direction: column;
    font-family: "DejaVu Sans Mono", monospace;
    font-size: 11.6px;
    color: #1a1a1a;
    border-top: 1px solid #9b9b9b;
    border-left: 1px solid #9b9b9b;
`;

const CmdHistory = styled.div`
    height: 35px;
    box-sizing: border-box;
    flex: none;
    display: flex;
    border-bottom: 1px solid #7d7d7d;
`;

const CmdLines = styled.div`
    flex: 1;
    margin-top: -2px;
    padding-left: 1px;
    line-height: 18px;
    white-space: pre;
`;

const CmdVBar = styled.div`
    width: 16px;
    flex: none;
    margin-right: 3px;
    background: #f0f0f0;
    display: flex;
    flex-direction: column;
    align-items: center;
    gap: 8px;
    padding-top: 5px;
`;

const CmdInput = styled.div`
    height: 19px;
    flex: none;
    display: flex;
    align-items: center;
    padding-left: 1px;
    position: relative;
`;

const CmdHBar = styled.div`
    position: absolute;
    right: 19px;
    top: 1px;
    width: 80px;
    height: 17px;
    background: #f0f0f0;
    display: flex;
    align-items: center;
    justify-content: space-between;
    padding: 0 6px;
    box-sizing: border-box;
`;

const CmdThumb = styled.div`
    position: absolute;
    left: 17px;
    top: 0;
    width: 17px;
    height: 17px;
    background: #cdcdcd;
`;

/* ---------- status bar ---------- */
const StatusBar = styled.div`
    height: 24px;
    flex: none;
    background: #8e939a;
    display: flex;
    align-items: center;
    margin-top: 1px;
    color: #eef0f3;
    font-size: 10.5px;
`;

const Coords = styled.div`
    width: 260px;
    flex: none;
    padding-left: 5px;
    box-sizing: border-box;
    white-space: nowrap;
`;

const StatusBtn = styled.div`
    width: ${p => p.$w || 22}px;
    height: 18px;
    flex: none;
    display: flex;
    align-items: center;
    justify-content: center;
    box-sizing: border-box;
    background: ${p => (p.$on ? '#f6e7b8' : 'transparent')};
    box-shadow: ${p => (p.$on ? 'inset 0 0 0 1px #d8b46a' : 'none')};
`;

const Scale = styled.div`
    display: flex;
    align-items: center;
    gap: 4px;
    width: 26px;
    flex: none;
    color: #e6e9ec;
    font-size: 11.5px;
`;

const Tray = styled.div`
    margin-left: auto;
    width: 192px;
    align-self: stretch;
    background: #f5f6f8;
    display: flex;
    align-items: center;
    padding-left: 8px;
    box-sizing: border-box;
    position: relative;
    color: #3a4a66;
    font-size: 11px;
    letter-spacing: .1px;
`;

const TrayBtn = styled.div`
    width: 22px;
    flex: none;
    display: flex;
    justify-content: center;
`;

const TrayLabel = styled.span`
    margin-left: 4px;
`;

const ResizeGrip = styled.div`
    position: absolute;
    right: 1px;
    bottom: 1px;
    width: 8px;
    height: 8px;
    background: radial-gradient(circle, #a9adb3 1px, transparent 1.2px) 0 0 / 3px 3px;
`;

/* ---------- the drawing ---------- */
const RED = '#ff0000';
const YEL = '#ffff00';
const GRN = '#00ff00';
const CYN = '#00ffff';
const BLU = '#0000ff';
const WHT = '#ffffff';
const GRY = '#808080';
const MAG = '#ff00ff';

const Lines = ({c, d, dash}) => (
    <g stroke={c} strokeWidth="1" strokeDasharray={dash}>
        {d.map((l, i) => <line key={i} x1={l[0]} y1={l[1]} x2={l[2]} y2={l[3]}/>)}
    </g>
);

// each box is x1,y1,x2,y2
const Boxes = ({c, d}) => (
    <g fill={c} stroke="none">
        {d.map((b, i) => <rect key={i} x={b[0]} y={b[1]} width={b[2] - b[0]} height={b[3] - b[1]}/>)}
    </g>
);

const Marker = ({x, y, box}) => (
    <g>
        <circle cx={x} cy={y} r="3" fill="none" stroke={BLU}/>
        <rect x={box[0]} y={box[1]} width={box[2]} height={box[3]} fill={RED}/>
    </g>
);

const TopElevation = () => (
    <g>
        <Lines c={RED} d={[[139, 156.5, 584, 156.5], [139.5, 154, 139.5, 172], [583.5, 154, 583.5, 172],
            [133.5, 171, 133.5, 235], [591.5, 171, 591.5, 235], [132, 172.5, 139, 172.5], [132, 189.5, 139, 189.5], [132, 234.5, 139, 234.5],
            [584, 172.5, 593, 172.5], [584, 189.5, 593, 189.5], [584, 234.5, 593, 234.5]]}/>
        <Boxes c={RED} d={[[358, 153, 366, 156], [129, 178, 133, 183], [129, 209, 133, 214], [587, 178, 591, 183], [587, 209, 591, 214]]}/>
        <Boxes c={GRN} d={[[141, 167, 175, 171]]}/>
        <Lines c={GRY} dash="5 2" d={[[139, 172.5, 584, 172.5], [139.5, 172, 139.5, 189], [583.5, 172, 583.5, 189]]}/>
        <Lines c={YEL} d={[[139, 189.5, 584, 189.5], [139.5, 189, 139.5, 234], [583.5, 189, 583.5, 234], [139, 233.5, 584, 233.5]]}/>
        <Lines c={GRN} d={[141.5, 146.5, 151.5, 156.5, 566.5, 571.5, 576.5, 582.5].map(x => [x, 212, x, 233])}/>
        <Lines c={MAG} d={[[141, 233.5, 159, 233.5], [564, 233.5, 583, 233.5]]}/>
        <Lines c={BLU} d={[[156, 222.5, 163, 222.5], [561, 222.5, 566, 222.5]]}/>
        <Marker x={165} y={222} box={[163, 219, 6, 4]}/>
        <Marker x={557} y={222} box={[555, 219, 6, 4]}/>
        <Boxes c={YEL} d={[[139, 234, 169, 238], [555, 234, 585, 238]]}/>
    </g>
);

const BEAM_GREEN = [141.5, 147.5, 183.5, 190.5, 196.5, 221.5, 228.5, 241.5, 348.5, 361.5, 374.5, 482.5, 494.5, 501.5, 526.5, 533.5, 539.5, 575.5, 582.5];

const BeamElevation = () => (
    <g>
        <Lines c={BLU} d={[305.5, 314.5, 323.5, 333.5, 342.5].flatMap(y => [[139, y, 196, y], [526, y, 583, y]])}/>
        <Lines c={GRN} d={BEAM_GREEN.map(x => [x, 287, x, 347])}/>
        <Lines c={GRY} dash="5 2" d={[[139, 284.5, 584, 284.5], [139.5, 284, 139.5, 303], [583.5, 284, 583.5, 303]]}/>
        <Lines c={CYN} d={[[139, 286.5, 584, 286.5], [139, 303.5, 584, 303.5], [139, 344.5, 584, 344.5]]}/>
        <Lines c={YEL} d={[[139, 301.5, 584, 301.5], [139, 346.5, 584, 346.5], [139.5, 303, 139.5, 346], [583.5, 303, 583.5, 346]]}/>
        <Lines c={MAG} d={[[141, 345.5, 159, 345.5], [564, 345.5, 584, 345.5]]}/>
        <Lines c={RED} d={[[139, 353.5, 584, 353.5], ...[139.5, 190.5, 228.5, 494.5, 533.5, 583.5].map(x => [x, 347, x, 355]), ...[141.5, 186.5, 193.5, 226.5, 231.5, 491.5, 497.5, 530.5, 536.5, 581.5].map(x => [x, 353, x, 355])]}/>
        <Boxes c={RED} d={[[162, 354, 168, 356], [206, 354, 212, 356], [358, 354, 366, 356], [511, 354, 517, 356], [555, 354, 561, 356]]}/>
        <Boxes c={YEL} d={[[164, 348, 188, 352], [209, 348, 233, 352], [361, 348, 385, 352], [513, 348, 537, 352], [558, 348, 582, 352]]}/>
        <Boxes c={GRN} d={[[141, 279, 175, 283]]}/>
        <Lines c={BLU} d={[[274.5, 276, 274.5, 287], [283.5, 276, 283.5, 286], [290.5, 275, 290.5, 304], [284.5, 335, 284.5, 344]]}/>
        <Marker x={275} y={276} box={[273, 274, 6, 4]}/>
        <Marker x={283.5} y={276} box={[282, 274, 3, 4]}/>
        <Marker x={290.5} y={275} box={[289, 273, 3, 4]}/>
        <Marker x={284} y={335} box={[282, 333, 3, 4]}/>
        {/* cursor, crosshair and UCS mark */}
        <Lines c={WHT} d={[[138.5, 277, 138.5, 346], [138, 346.5, 218, 346.5], [218, 331, 234, 347], [234, 331, 218, 347],
            [138, 252, 146.5, 259], [155, 252, 146.5, 259], [146.5, 259, 146.5, 268]]}/>
        <rect x="133.5" y="340.5" width="11" height="11" fill="none" stroke={WHT}/>
    </g>
);

const STRIPS = [
    {y: 374.5, c: CYN, x1: 139, barW: 55},
    {y: 407.5, c: WHT, x1: 141, barW: 28},
    {y: 437.5, c: WHT, x1: 141, barW: 28},
    {y: 468.5, c: CYN, x1: 141, barW: 28},
    {y: 559.5, c: WHT, x1: 141, barW: 28},
];

const Strip = ({y, c, x1, barW}) => {
    const t = Math.floor(y);
    return (
        <g>
            <Lines c={c} d={[[x1, y, 584, y]]}/>
            <Boxes c={YEL} d={[[361, t - 6, 361 + barW, t - 2]]}/>
            <Boxes c={RED} d={[[362, t, 371, t + 4]]}/>
            <Marker x={357.5} y={t - 4} box={[356, t - 6, 4, 4]}/>
        </g>
    );
};

const BeamSectionA = ({dx, withBars}) => (
    <g transform={`translate(${dx} 0)`}>
        <Lines c={RED} d={[[671, 161.5, 700, 161.5], [672.5, 161, 672.5, 172], [680.5, 161, 680.5, 172], [690.5, 161, 690.5, 172], [698.5, 161, 698.5, 172],
            [669.5, 172, 669.5, 234], [668, 172.5, 672, 172.5], [668, 189.5, 672, 189.5], [668, 233.5, 672, 233.5],
            [672.5, 234, 672.5, 245], [698.5, 234, 698.5, 245], [671, 244.5, 700, 244.5]]}/>
        <Boxes c={RED} d={[[672, 157, 680, 161], [682, 153, 688, 161], [691, 157, 697, 161], [665, 178, 669, 183], [665, 209, 669, 214], [682, 240, 688, 243]]}/>
        <Lines c={GRY} dash="3 1" d={[[680.5, 172, 680.5, 189], [690.5, 172, 690.5, 189], [680, 172.5, 691, 172.5]]}/>
        <rect x="672.5" y="189.5" width="26" height="44" fill="none" stroke={YEL}/>
        {withBars && <Lines c={GRN} d={[[674.5, 212, 674.5, 233], [696.5, 212, 696.5, 233], [673, 233.5, 698, 233.5]]}/>}
        {withBars && <Lines c={BLU} d={[[681.5, 226, 681.5, 234]]}/>}
        {withBars && <Marker x={681} y={225} box={[679, 222, 6, 4]}/>}
        <Boxes c={GRN} d={[[672, 248, 695, 252]]}/>
    </g>
);

const BeamSectionB = ({dx}) => (
    <g transform={`translate(${dx} 0)`}>
        <Lines c={BLU} d={[[685.5, 276, 685.5, 286], [670, 286.5, 700, 286.5], [685.5, 286, 685.5, 292],
            [674, 298.5, 697, 298.5], [674.5, 298, 674.5, 302], [696.5, 298, 696.5, 302],
            [672.5, 313, 672.5, 335], [699.5, 313, 699.5, 335], [666, 324.5, 672, 324.5], [700, 324.5, 706, 324.5],
            [674, 349.5, 696, 349.5], [674.5, 346, 674.5, 350], [695.5, 346, 695.5, 350], [685.5, 350, 685.5, 354]]}/>
        <Lines c={GRY} dash="3 1" d={[[680.5, 284, 680.5, 302], [690.5, 284, 690.5, 302], [680, 284.5, 691, 284.5]]}/>
        <rect x="672.5" y="301.5" width="26" height="45" fill="none" stroke={YEL}/>
        <rect x="674.5" y="303.5" width="22" height="41" fill="none" stroke={CYN}/>
        <Lines c={CYN} d={[[681.5, 286, 681.5, 344], [688.5, 286, 688.5, 344], [681, 286.5, 689, 286.5], [677, 343.5, 679, 343.5], [683, 343.5, 685, 343.5], [691, 343.5, 693, 343.5]]}/>
        <Marker x={685.5} y={275} box={[683.5, 272, 3, 4]}/>
        <Marker x={670} y={287} box={[668, 284, 6, 4]}/>
        <Marker x={700} y={287} box={[698, 284, 6, 4]}/>
        <Marker x={685.5} y={291} box={[683.5, 289, 3, 4]}/>
        <Marker x={665} y={324} box={[663, 321, 6, 4]}/>
        <Marker x={706} y={324} box={[704, 321, 6, 4]}/>
        <Marker x={685.5} y={355} box={[683.5, 353, 3, 4]}/>
        <Boxes c={GRN} d={[[672, 360, 695, 364]]}/>
    </g>
);

// small stirrup shapes, row 1 and row 3 have the same outline
const Stirrup = ({x, y, h, w}) => (
    <g>
        <path d={`M${x + .5} ${y + h}V${y + 2}l8 -1 10 -2 ${w - 18} -1M${x + w + .5} ${y - 1}V${y + h + .5}H${x}`} fill="none" stroke={CYN}/>
        <Lines c={CYN} d={[[x + w - 5, y + 5, x + w, y - 1]]}/>
    </g>
);

const SmallSections = () => (
    <g>
        <Stirrup x={672} y={378} h={41} w={22}/>
        <Stirrup x={731} y={378} h={41} w={22}/>
        <Boxes c={RED} d={[[684, 376, 691, 380], [694, 376, 699, 383], [673, 398, 680, 402], [696, 398, 703, 402], [685, 419, 692, 423],
            [743, 376, 750, 380], [752, 376, 757, 383], [732, 398, 739, 402], [754, 398, 761, 402], [743, 419, 750, 423]]}/>
        <Boxes c={YEL} d={[[673, 423, 709, 427], [731, 423, 768, 427]]}/>
        <Marker x={669} y={426} box={[667, 423, 3, 4]}/>
        <Marker x={727} y={426} box={[725, 423, 3, 4]}/>

        <path d="M680.5 518V459.5l7 -1V518M680 518h8" fill="none" stroke={CYN}/>
        <path d="M731.5 518V459.5l7 -1V518M731 518h8" fill="none" stroke={CYN}/>
        <Boxes c={RED} d={[[684, 458, 691, 465], [681, 488, 695, 492], [685, 517, 692, 521],
            [737, 458, 742, 465], [732, 488, 746, 492], [735, 517, 742, 521]]}/>
        <Boxes c={YEL} d={[[680, 521, 717, 525], [731, 521, 768, 525]]}/>
        <Marker x={676} y={524} box={[674, 521, 3, 4]}/>
        <Marker x={728} y={524} box={[725, 521, 6, 4]}/>

        <Stirrup x={672} y={553} h={41} w={22}/>
        <Stirrup x={731} y={553} h={41} w={22}/>
        <Boxes c={RED} d={[[684, 551, 691, 555], [693, 551, 700, 559], [673, 573, 680, 577], [696, 573, 703, 577], [685, 594, 692, 598],
            [743, 551, 750, 555], [752, 551, 759, 559], [732, 573, 739, 577], [754, 573, 761, 577], [743, 594, 750, 598]]}/>
        <Boxes c={YEL} d={[[673, 603, 720, 607], [733, 603, 780, 607]]}/>
        <Marker x={669} y={605} box={[667, 603, 6, 4]}/>
        <Marker x={729} y={605} box={[727, 603, 6, 4]}/>
    </g>
);

const BottomParts = () => (
    <g>
        <Lines c={BLU} d={[[139, 620.5, 196, 620.5], [139, 643.5, 196, 643.5], [526, 620.5, 583, 620.5], [526, 643.5, 583, 643.5], [583.5, 620, 583.5, 644]]}/>
        <Boxes c={RED} d={[[168, 620, 175, 624], [139, 632, 147, 636], [168, 642, 175, 646], [555, 620, 562, 624], [584, 632, 590, 636], [555, 642, 562, 646]]}/>
        <Boxes c={YEL} d={[[141, 647, 203, 651], [526, 647, 588, 651]]}/>
        <Marker x={137} y={649} box={[135, 647, 4, 4]}/>
        <Marker x={523} y={649} box={[521, 647, 4, 4]}/>

        <Lines c={WHT} d={[[139.5, 746, 139.5, 770], [162.5, 746, 162.5, 770], [139, 769.5, 163, 769.5], [561.5, 746, 561.5, 770], [584.5, 746, 584.5, 770], [561, 769.5, 585, 769.5]]}/>
        <Boxes c={RED} d={[[139, 757, 147, 761], [154, 757, 161, 761], [150, 767, 156, 770], [561, 757, 569, 761], [576, 757, 583, 761], [572, 767, 578, 770]]}/>
        <Boxes c={YEL} d={[[139, 770, 186, 774], [560, 770, 608, 774]]}/>
        <Marker x={137} y={772} box={[135, 770, 4, 4]}/>
        <Marker x={558} y={772} box={[556, 770, 4, 4]}/>
    </g>
);

/* the title block: each row is y, then cells of x1, x2, x where the white text ends */
const COL6 = [[838, 859], [860, 882], [883, 904], [905, 926], [927, 948], [950, 970]];
const rowCells = (whites) => COL6.map((c, i) => [c[0], c[1], c[0] + whites[i]]);
const BLOCK_ROWS = [
    [138, [[838, 970, 866]]],
    [143, [[838, 970, 858]]],
    [151, [[838, 870, 857], [872, 903, 889], [905, 936, 923], [938, 970, 958]]],
    [157, [[838, 870, 846], [872, 903, 882], [905, 936, 917], [938, 970, 952]]],
    [163, [[838, 970, 872]]],
    [170, rowCells([7, 15, 8, 8, 13, 20])],
    [176, rowCells([3, 9, 3, 5, 8, 10])],
    [182, rowCells([3, 9, 3, 5, 8, 10])],
    [189, rowCells([3, 9, 3, 5, 8, 12])],
    [195, rowCells([3, 9, 5, 5, 8, 10])],
    [201, rowCells([5, 9, 3, 5, 8, 8])],
    [207, rowCells([5, 9, 3, 5, 8, 8])],
    [214, rowCells([3, 9, 5, 3, 8, 10])],
    [220, rowCells([3, 9, 5, 3, 8, 10])],
    [226, rowCells([3, 9, 5, 3, 8, 10])],
    [232, rowCells([5, 9, 5, 3, 8, 10])],
    [239, rowCells([5, 9, 3, 5, 8, 10])],
    [245, rowCells([3, 9, 3, 5, 8, 10])],
    [251, rowCells([5, 9, 3, 5, 8, 10])],
    [258, [[838, 948, 851], [950, 970, 962]]],
    [265, [[838, 970, 886]]],
    [271, rowCells([13, 15, 0, 7, 0, 20])],
    [277, rowCells([3, 9, 0, 5, 0, 10])],
    [284, rowCells([3, 9, 0, 5, 0, 10])],
    [290, rowCells([3, 9, 0, 5, 0, 12])],
    [296, rowCells([3, 9, 0, 5, 0, 10])],
    [303, rowCells([3, 9, 0, 5, 0, 10])],
    [309, rowCells([3, 9, 0, 5, 0, 10])],
    [315, rowCells([3, 9, 0, 5, 0, 10])],
    [322, [[838, 948, 851], [950, 970, 962]]],
];

// the black cell runs down to the next row, the white text stays 4-5px high
const TitleBlock = () => (
    <g>
        <rect x="838" y="138" width="132" height="190" fill={WHT}/>
        {BLOCK_ROWS.map(([y, cells], i) => {
            const next = i + 1 < BLOCK_ROWS.length ? BLOCK_ROWS[i + 1][0] : 328;
            return cells.map(([x1, x2, xw]) => (
                <g key={`${y}-${x1}`}>
                    <rect x={x1} y={y} width={x2 - x1} height={next - y - 1} fill="#000"/>
                    <rect x={x1} y={y} width={xw - x1} height={Math.min(next - y - 1, 5)} fill={WHT}/>
                </g>
            ));
        })}
    </g>
);

const Drawing = () => (
    <svg width="969" height="685" viewBox="38 132 969 685" shapeRendering="crispEdges" style={{display: 'block'}}>
        <rect x="76.5" y="137.5" width="894" height="676" fill="none" stroke={WHT}/>
        <Lines c={WHT} d={[[837.5, 137, 837.5, 814]]}/>
        <TopElevation/>
        <BeamElevation/>
        {STRIPS.map(s => <Strip key={s.y} {...s}/>)}
        <BeamSectionA dx={0} withBars/>
        <BeamSectionA dx={51}/>
        <BeamSectionB dx={0}/>
        <BeamSectionB dx={51}/>
        <SmallSections/>
        <BottomParts/>
        <TitleBlock/>
    </svg>
);

/* ---------- data ---------- */
const MENU = [
    ['', 'F', 'ile'], ['', 'E', 'dit'], ['', 'V', 'iew'], ['', 'I', 'nsert'], ['F', 'o', 'rmat'], ['', 'T', 'ools'],
    ['', 'D', 'raw'], ['Te', 'x', 't'], ['Dime', 'n', 'sion'], ['', 'M', 'odify'], ['', 'W', 'indow'],
    ['', 'A', 'pplication'], ['', 'H', 'elp'], ['Expre', 's', 's'],
];
const DRAW_TOOLS = ['line', 'xline', 'pline', 'polygon', 'rect', 'arc', 'circle', 'cloud', 'spline', 'ellipse', 'earc',
    'insert', 'blockdef', 'point', 'hatch', 'gradient', 'region', 'wipeout', 'table', 'text', 'addsel'];
const DIM_TOOLS = [
    ['dimlinear', 'dimaligned', 'dimarc', 'dimord'],
    ['dimrad', 'dimjog', 'dimdia', 'dimang'],
    ['quickdim', 'dimbase', 'dimcont', 'dimspace', 'dimbreak'],
    ['leader', 'tol', 'center', 'inspect', 'jogline'],
    ['dimedit', 'dimtedit', 'dimupdate'],
    ['dimbrush'],
];
const MODIFY_TOOLS = ['erase', 'copyobj', 'mirror', 'offset', 'array', 'move', 'rotate', 'scale', 'stretch', 'trim', 'extend',
    'breakpt', 'breaks', 'join', 'chamfer', 'fillet', 'explode'];
const STATUS_TOOLS = ['snap', 'grid', 'ortho', 'polar', 'osnap', 'otrack', 'ducs', 'dyn', 'lwt', 'seltrans', 'qp', 'sc'];

const Btns = ({names}) => names.map(n => <ToolBtn key={n}><Icon name={n}/></ToolBtn>);

const Logo = () => (
    <svg width="36" height="36" viewBox="0 0 36 36" style={{display: 'block'}}>
        <defs>
            <linearGradient id="ring" x1="0" y1="0" x2="0" y2="1">
                <stop offset="0" stopColor="#e4e4e4"/>
                <stop offset="1" stopColor="#9c9c9c"/>
            </linearGradient>
            <linearGradient id="gee" x1="0" y1="0" x2="0" y2="1">
                <stop offset="0" stopColor="#59b8f2"/>
                <stop offset="1" stopColor="#1272d4"/>
            </linearGradient>
        </defs>
        <circle cx="18" cy="18" r="17.5" fill="url(#ring)"/>
        <circle cx="18" cy="17" r="14.5" fill="#f4f4f4"/>
        <path d="M29 8H16C10 8 6.5 12 5.5 18c-.8 5 2 8.500 7 8.500h7c3 0 4.500-2 5-4.500l1.500-7H15.500l-1 4.500h5l-.5 2c-.2 .7-.8 1-1.500 1h-3.500c-2.500 0-3.500-1.500-3-4 .5-3 2.500-5.500 5.500-5.500H28z" fill="url(#gee)"/>
    </svg>
);

export default function App() {
    return (
        <Frame>
            <GlobalStyle/>
            <LogoWrap><Logo/></LogoWrap>
            <TitleBar>
                <Quick>
                    <QuickBtn><Icon name="new"/></QuickBtn>
                    <QuickBtn><Icon name="open"/></QuickBtn>
                    <QuickBtn><Icon name="save"/></QuickBtn>
                    <QuickBtn><Icon name="saveas"/></QuickBtn>
                    <QuickBtn><Icon name="print"/></QuickBtn>
                    <QuickBtn><Icon name="undo"/></QuickBtn>
                    <QuickBtn $w={13}><Caret/></QuickBtn>
                    <QuickBtn $w={19}><Icon name="redoOff"/></QuickBtn>
                    <QuickBtn $w={13}><Caret $color="#9a9a9a"/></QuickBtn>
                    <ProfileCombo>
                        GstarCAD Classic
                        <ProfileDrop><Caret $color="#3d3d3d"/></ProfileDrop>
                    </ProfileCombo>
                    <QatMore><Caret $color="#555"/></QatMore>
                </Quick>
                <WindowTitle>GstarCAD 2018 Professional - [kiris4.dxf]</WindowTitle>
                <WindowBtns>
                    <WinBtn $w={27}><MinGlyph/></WinBtn>
                    <WinBtn $w={27}><MaxGlyph/></WinBtn>
                    <WinBtn $w={45} $bg="#c75050">
                        <svg width="10" height="10" viewBox="0 0 10 10"><path d="M1 1l8 8M9 1l-8 8" stroke="#fff" strokeWidth="2"/></svg>
                    </WinBtn>
                </WindowBtns>
            </TitleBar>

            <MenuBar>
                {MENU.map(([a, u, b]) => <MenuItem key={a + u + b}>{a}<u>{u}</u>{b}</MenuItem>)}
                <MenuRight>
                    Appearance
                    <svg width="9" height="6" viewBox="0 0 9 6"><path d="M1.5 1l3 3 3-3" fill="none" stroke="#dfe5ee"/></svg>
                    <DocBtns>
                        <svg width="9" height="9" viewBox="0 0 9 9"><path d="M1 8h7" stroke="#7f8a9b" strokeWidth="2"/></svg>
                        <svg width="9" height="9" viewBox="0 0 9 9"><path d="M.5 2.5h6v6h-6zM2.5 2V.5h6v5H7" fill="none" stroke="#8a95a6"/></svg>
                        <svg width="10" height="10" viewBox="0 0 10 10"><path d="M1 1l8 8M9 1l-8 8" stroke="#8a95a6" strokeWidth="2"/></svg>
                    </DocBtns>
                </MenuRight>
            </MenuBar>

            <ToolRows>
                <ToolRow>
                    <Grip $w={9}/>
                    <Btns names={['new', 'open', 'save']}/>
                    <Sep $l={3} $r={4}/>
                    <Btns names={['print', 'preview', 'plot']}/>
                    <Sep $l={3} $r={4}/>
                    <Btns names={['cut', 'copy', 'paste', 'match', 'block']}/>
                    <Sep $l={4} $r={6}/>
                    <ToolBtn $w={22}><Icon name="undo"/></ToolBtn>
                    <ToolBtn $w={19}><Caret/></ToolBtn>
                    <ToolBtn $w={19}><Icon name="redo"/></ToolBtn>
                    <ToolBtn $w={20}><Caret/></ToolBtn>
                    <Sep $l={0} $r={5}/>
                    <Btns names={['pan', 'zoomrt', 'zoomwin', 'zoomprev']}/>
                    <Sep $l={3} $r={5}/>
                    <Btns names={['props', 'palette', 'cog', 'calc']}/>
                    <Sep $l={1} $r={5}/>
                    <ToolBtn><Icon name="help"/></ToolBtn>
                    <Grip $w={13}/>
                    <ToolBtn $w={24}><Icon name="textstyle"/></ToolBtn>
                    <Combo $w={148} $pad={22}>
                        <ComboText $ls={-0.3}>Standard</ComboText>
                        <ComboEnd><Chevron/></ComboEnd>
                    </Combo>
                    <Sep $l={3} $r={5}/>
                    <ToolBtn $w={24}><Icon name="dimstyle"/></ToolBtn>
                    <Combo $w={147} $pad={22} $ml={1}>
                        <ComboText $ls={-0.3}>Standard</ComboText>
                        <ComboEnd><Chevron/></ComboEnd>
                    </Combo>
                    <Sep $l={3} $r={5}/>
                    <ToolBtn $w={24}><Icon name="tablestyle"/></ToolBtn>
                    <Combo $w={70} $pad={23}>
                        <ComboText $ls={-0.3}>Standard</ComboText>
                    </Combo>
                </ToolRow>
                <ToolRow $h={22}>
                    <Grip $w={10}/>
                    <ToolBtn $w={24}><Icon name="layerprops"/></ToolBtn>
                    <LayerCombo $w={298}>
                        <ToolBtn $w={17}><Icon name="bulb" size={17}/></ToolBtn>
                        <ToolBtn $w={17}><Icon name="sun" size={17}/></ToolBtn>
                        <ToolBtn $w={16}><Icon name="lock" size={18}/></ToolBtn>
                        <Swatch/>
                        <LayerName>0</LayerName>
                        <ComboEnd><Chevron/></ComboEnd>
                    </LayerCombo>
                    <Btns names={['layerA', 'layerB', 'layerC', 'layerD']}/>
                    <Grip $w={14}/>
                    <Combo $w={148}>
                        <Swatch/>
                        <ComboText $ls={-0.3}>ByLayer</ComboText>
                        <ComboEnd><Chevron/></ComboEnd>
                    </Combo>
                    <Sep $l={3} $r={7}/>
                    <Combo $w={177} $pad={8}>
                        <LineSample $w={67}/>
                        <ComboText $ls={-0.3}>ByLayer</ComboText>
                        <ComboEnd><Chevron/></ComboEnd>
                    </Combo>
                    <Sep $l={4} $r={5}/>
                    <Combo $w={148} $pad={6}>
                        <LineSample $w={42}/>
                        <ComboText $ls={-0.3}>ByLayer</ComboText>
                        <ComboEnd><Chevron/></ComboEnd>
                    </Combo>
                    <Sep $l={4} $r={6}/>
                    <Combo $w={122} $pad={23}>
                        <ComboText $ls={-0.5}>BYCOLOR</ComboText>
                    </Combo>
                </ToolRow>
            </ToolRows>

            <Workspace>
                <Dock $w={23}>
                    <DockGrip/>
                    {DRAW_TOOLS.map(n => <DockBtn key={n}><Icon name={n}/></DockBtn>)}
                </Dock>
                <Doc>
                    <DocTabs>
                        <DocTab>
                            kiris4.dxf
                            <TabClose>×</TabClose>
                        </DocTab>
                        <DocListBtn/>
                    </DocTabs>
                    <CanvasRow>
                        <Canvas><Drawing/></Canvas>
                        <VScroll>
                            <Arrowhead dir="up"/>
                            <VThumb/>
                            <Arrowhead dir="down"/>
                        </VScroll>
                    </CanvasRow>
                    <DocBottom>
                        <TabNav>
                            <NavGlyph viewBox="0 0 8 8"><path d="M0 0h1.5v8H0zM7 0v8L2 4z"/></NavGlyph>
                            <NavGlyph viewBox="0 0 8 8"><path d="M6 0v8L1 4z"/></NavGlyph>
                            <NavGlyph viewBox="0 0 8 8"><path d="M2 0v8l5-4z"/></NavGlyph>
                            <NavGlyph viewBox="0 0 8 8"><path d="M8 0H6.5v8H8zM1 0v8l5-4z"/></NavGlyph>
                        </TabNav>
                        <ModelTab>Model</ModelTab>
                        <LayoutTab>Layout1</LayoutTab>
                        <HScroll>
                            <Arrowhead dir="left"/>
                            <HThumb/>
                            <Arrowhead dir="right"/>
                        </HScroll>
                    </DocBottom>
                </Doc>
                <Dock $w={23} $mr={2}>
                    <DockGrip/>
                    {DIM_TOOLS.map((group, i) => (
                        <React.Fragment key={group[0]}>
                            {i > 0 && <DockSep $h={i === 2 ? 9 : 7}/>}
                            {group.map(n => <DockBtn key={n}><Icon name={n}/></DockBtn>)}
                        </React.Fragment>
                    ))}
                </Dock>
                <Dock>
                    <DockGrip/>
                    {MODIFY_TOOLS.map(n => <DockBtn key={n}><Icon name={n}/></DockBtn>)}
                    <DockGrip/>
                    {['front', 'back', 'above', 'below'].map(n => <DockBtn key={n}><Icon name={n}/></DockBtn>)}
                    <DockSep/>
                    {['spell', 'mtedit'].map(n => <DockBtn key={n}><Icon name={n}/></DockBtn>)}
                </Dock>
            </Workspace>

            <CommandWin>
                <CmdSide>
                    <span>×</span>
                    <svg width="9" height="11" viewBox="0 0 9 11"><path d="M2 1h5v5H2zM1 6h7M4.5 6v5" fill="none" stroke="#f4f6f9" strokeWidth="1.3"/></svg>
                </CmdSide>
                <CmdMain>
                    <CmdHistory>
                        <CmdLines>
                            {'[All/Center/Dynamic/Extents/Previous/Scale/Window/Object] <real time>: _e\nRegenerating model.'}
                        </CmdLines>
                        <CmdVBar>
                            <Arrowhead dir="up"/>
                            <Arrowhead dir="down"/>
                        </CmdVBar>
                    </CmdHistory>
                    <CmdInput>
                        Command:
                        <CmdHBar>
                            <Arrowhead dir="left"/>
                            <CmdThumb/>
                            <Arrowhead dir="right"/>
                        </CmdHBar>
                    </CmdInput>
                </CmdMain>
            </CommandWin>

            <StatusBar>
                <Coords>-1551.5163, -7407.2633, 0.0000</Coords>
                {STATUS_TOOLS.map(n => <StatusBtn key={n} $on={n === 'osnap'}><Icon name={n} size={18}/></StatusBtn>)}
                <StatusBtn $on><Icon name="model" size={18}/></StatusBtn>
                <StatusBtn><Icon name="anno" size={18}/></StatusBtn>
                <Scale>1:1<Chevron color="#e6e9ec"/></Scale>
                <StatusBtn><Icon name="annoB" size={18}/></StatusBtn>
                <StatusBtn><Icon name="annoC" size={18}/></StatusBtn>
                <Tray>
                    <TrayBtn><Icon name="cog" size={18}/></TrayBtn>
                    <TrayBtn><Icon name="lock" size={18}/></TrayBtn>
                    <TrayBtn><Icon name="bulb" size={18}/></TrayBtn>
                    <TrayBtn><Icon name="traytoolbar" size={18}/></TrayBtn>
                    <TrayBtn><Icon name="window" size={18}/></TrayBtn>
                    <TrayLabel>GstarCAD</TrayLabel>
                    <ResizeGrip/>
                </Tray>
            </StatusBar>
        </Frame>
    );
}
